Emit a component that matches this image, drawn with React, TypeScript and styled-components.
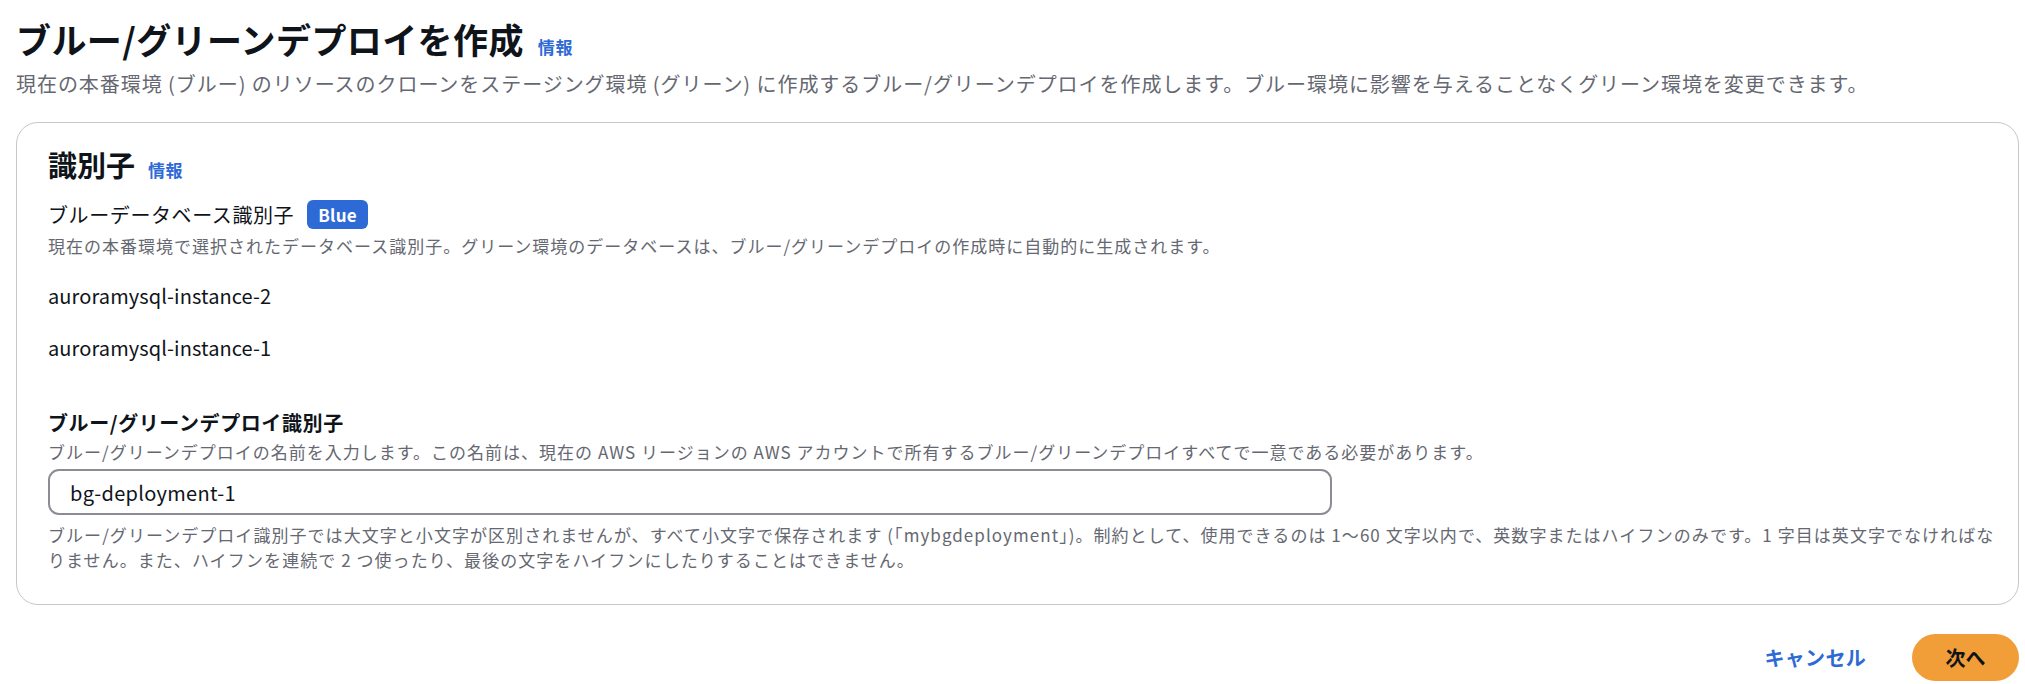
import React from "react";
import styled, { createGlobalStyle } from "styled-components";

const GlobalStyle = createGlobalStyle`
  html, body {
    margin: 0;
    padding: 0;
    background: #ffffff;
  }
  body {
    font-family: "Noto Sans CJK JP", "Noto Sans", sans-serif;
    color: #0f141a;
    -webkit-font-smoothing: antialiased;
  }
  * { box-sizing: border-box; }
`;

const Page = styled.main`
  width: 2025px;
  padding: 18px 6px 0 16px;
  display: flex;
  flex-direction: column;
`;

const Header = styled.header`
  display: flex;
  flex-direction: column;
  gap: 11px;
  margin-bottom: 25px;
`;

const TitleRow = styled.div`
  display: flex;
  align-items: baseline;
  gap: 14px;
`;

const Title = styled.h1`
  margin: 0;
  font-size: 35px;
  line-height: 42px;
  font-weight: 700;
  letter-spacing: 0.4px;
  color: #0f141a;
`;

const InfoLink = styled.a`
  font-size: 17px;
  line-height: 23px;
  font-weight: 700;
  letter-spacing: 0.6px;
  color: #2d6ad6;
  text-decoration: none;
  cursor: pointer;
`;

const Subtitle = styled.p`
  margin: 0;
  font-size: 20px;
  line-height: 26px;
  letter-spacing: 0.95px;
  color: #656871;
`;

const Card = styled.section`
  border: 1px solid #c6c6cd;
  border-radius: 22px;
  padding: 24px 4px 32px 31px;
  display: flex;
  flex-direction: column;
`;

const CardHeader = styled.div`
  display: flex;
  align-items: baseline;
  gap: 13px;
  margin-bottom: 19px;
`;

const CardTitle = styled.h2`
  margin: 0;
  font-size: 29px;
  line-height: 34px;
  font-weight: 700;
  color: #0f141a;
`;

const Field = styled.div`
  display: flex;
  flex-direction: column;
`;

const LabelRow = styled.div`
  display: flex;
  align-items: center;
  gap: 13px;
  height: 29px;
`;

const Label = styled.span<{ $strong?: boolean }>`
  font-size: 20px;
  line-height: 26px;
  font-weight: ${(p) => (p.$strong ? 700 : 400)};
  letter-spacing: 0.6px;
  color: #0f141a;
`;

const Badge = styled.span`
  display: inline-flex;
  align-items: center;
  justify-content: center;
  height: 29px;
  padding: 0 11px;
  border-radius: 6px;
  background: #2d6ad6;
  color: #ffffff;
  font-size: 17px;
  font-weight: 700;
  letter-spacing: 0.3px;
`;

const Description = styled.p<{ $gap?: number; $spacing?: number; $lineHeight?: number }>`
  margin: ${(p) => p.$gap ?? 5}px 0 0 0;
  font-size: 17px;
  line-height: ${(p) => p.$lineHeight ?? 23}px;
  letter-spacing: ${(p) => p.$spacing ?? 1}px;
  color: #656871;
`;

const InstanceList = styled.ul`
  list-style: none;
  margin: 26px 0 0 0;
  padding: 0;
  display: flex;
  flex-direction: column;
  gap: 26px;
`;

const Instance = styled.li`
  font-size: 20px;
  line-height: 26px;
  letter-spacing: 0.1px;
  color: #0f141a;
`;

const DeploymentField = styled(Field)`
  margin-top: 49px;
`;

const Input = styled.input`
  margin-top: 6px;
  width: 1284px;
  height: 46px;
  border: 2px solid #8c8c94;
  border-radius: 11px;
  padding: 0 20px;
  font-family: "Noto Sans CJK JP", "Noto Sans", sans-serif;
  font-size: 20px;
  letter-spacing: 0.3px;
  color: #0f141a;
  background: #ffffff;
  outline: none;
`;

const Actions = styled.footer`
  display: flex;
  justify-content: flex-end;
  align-items: center;
  gap: 46px;
  margin-top: 29px;
`;

const CancelLink = styled.a`
  font-size: 20px;
  font-weight: 700;
  letter-spacing: 0.3px;
  color: #2d6ad6;
  text-decoration: none;
  cursor: pointer;
`;

const PrimaryButton = styled.button`
  height: 47px;
  width: 107px;
  border: none;
  border-radius: 24px;
  background: #f19d38;
  color: #0f141a;
  font-family: "Noto Sans CJK JP", "Noto Sans", sans-serif;
  font-size: 20px;
  font-weight: 700;
  cursor: pointer;
`;

const instances = ["auroramysql-instance-2", "auroramysql-instance-1"];

export default function App() {
  return (
    <>
      <GlobalStyle />
      <Page>
        <Header>
          <TitleRow>
            <Title>ブルー/グリーンデプロイを作成</Title>
            <InfoLink>情報</InfoLink>
          </TitleRow>
          <Subtitle>
            現在の本番環境 (ブルー) のリソースのクローンをステージング環境 (グリーン) に作成するブルー/グリーンデプロイを作成します。ブルー環境に影響を与えることなくグリーン環境を変更できます。
          </Subtitle>
        </Header>
        <Card>
          <CardHeader>
            <CardTitle>識別子</CardTitle>
            <InfoLink>情報</InfoLink>
          </CardHeader>
          <Field>
            <LabelRow>
              <Label>ブルーデータベース識別子</Label>
              <Badge>Blue</Badge>
            </LabelRow>
            <Description>
              現在の本番環境で選択されたデータベース識別子。グリーン環境のデータベースは、ブルー/グリーンデプロイの作成時に自動的に生成されます。
            </Description>
          </Field>
          <InstanceList>
            {instances.map((name) => (
              <Instance key={name}>{name}</Instance>
            ))}
          </InstanceList>
          <DeploymentField>
            <Label $strong>ブルー/グリーンデプロイ識別子</Label>
            <Description $gap={4}>
              ブルー/グリーンデプロイの名前を入力します。この名前は、現在の AWS リージョンの AWS アカウントで所有するブルー/グリーンデプロイすべてで一意である必要があります。
            </Description>
            <Input defaultValue="bg-deployment-1" />
            <Description $gap={7} $spacing={1.05} $lineHeight={25}>
              ブルー/グリーンデプロイ識別子では大文字と小文字が区別されませんが、すべて小文字で保存されます (「mybgdeployment」)。制約として、使用できるのは 1〜60 文字以内で、英数字またはハイフンのみです。1 字目は英文字でなければな
              <br />
              りません。また、ハイフンを連続で 2 つ使ったり、最後の文字をハイフンにしたりすることはできません。
            </Description>
          </DeploymentField>
        </Card>
        <Actions>
          <CancelLink>キャンセル</CancelLink>
          <PrimaryButton>次へ</PrimaryButton>
        </Actions>
      </Page>
    </>
  );
}
